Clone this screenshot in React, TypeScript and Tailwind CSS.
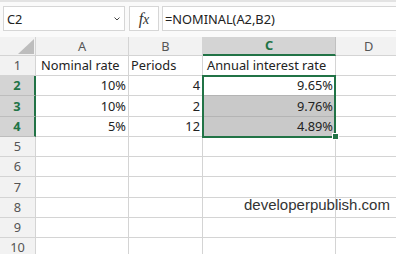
import React from "react";

const rowHeights = ["h-[20px]", "h-[20px]", "h-[21px]", "h-[20px]", "h-[20px]", "h-[20px]", "h-[21px]", "h-[20px]", "h-[20px]", "h-[20px]"];

type Cell = { text?: string; align?: "l" | "r"; pl?: string; fill?: boolean; darkLine?: boolean };

const data: Cell[][] = [
  [{ text: "Nominal rate", pl: "pl-[5px]" }, { text: "Periods", pl: "pl-[2px]" }, { text: "Annual interest rate", pl: "pl-[4px]" }, {}],
  [{ text: "10%", align: "r" }, { text: "4", align: "r" }, { text: "9.65%", align: "r", darkLine: true }, {}],
  [{ text: "10%", align: "r" }, { text: "2", align: "r" }, { text: "9.76%", align: "r", fill: true, darkLine: true }, {}],
  [{ text: "5%", align: "r" }, { text: "12", align: "r" }, { text: "4.89%", align: "r", fill: true }, {}],
];

export default function App() {
  return (
    <div className="relative w-[396px] h-[254px] overflow-hidden bg-[#fafafa] font-['Noto_Sans',sans-serif] text-[12.8px] text-[#222]">
      {/* top band */}
      <div className="h-[2px] bg-[#e3e3e3]" />
      {/* formula bar */}
      <div className="flex h-[35px] pt-[4px]">
        <div className="ml-[3px] flex h-[25px] w-[122px] items-center justify-between border border-[#d6d6d6] bg-white pl-[3px] pr-[4px]">
          <span className="leading-[17px] pt-[1px]">C2</span>
          <svg width="6" height="4" viewBox="0 0 6 4" className="mt-[1px]">
            <path d="M0.5 0.5 L3 3 L5.5 0.5" fill="none" stroke="#444" strokeWidth="1" />
          </svg>
        </div>
        <div className="ml-[4px] flex h-[25px] w-[30px] items-center justify-center border border-[#d6d6d6] bg-white">
          <span className="font-['Liberation_Serif',serif] italic text-[16px] leading-[17px] text-[#333]">
            f<span className="text-[14px]">x</span>
          </span>
        </div>
        <div className="ml-[3px] mr-[-4px] flex h-[25px] flex-1 items-center border border-[#d6d6d6] bg-white pl-[2px]">
          <span className="leading-[17px] pt-[2px]">=NOMINAL(A2,B2)</span>
        </div>
      </div>
      {/* sheet grid */}
      <div className="grid grid-cols-[36px_93px_74px_133px_1fr]">
        {/* header row */}
        <div className="relative h-[19px] border-r border-b border-[#d4d4d4] bg-[#f2f2f2]">
          <svg width="16" height="15" viewBox="0 0 16 15" className="absolute left-[18px] top-[2px]">
            <polygon points="16,0 16,15 0,15" fill="#bdbdbd" />
          </svg>
        </div>
        <div className="flex h-[19px] items-center justify-center border-r border-b border-[#d4d4d4] bg-[#f2f2f2] leading-[17px] text-[#555]">A</div>
        <div className="flex h-[19px] items-center justify-center border-r border-b border-[#d4d4d4] bg-[#f2f2f2] leading-[17px] text-[#555]">B</div>
        <div className="flex h-[19px] items-center justify-center border-r border-b-2 border-r-[#c0c0c0] border-b-[#217346] bg-[#d4d4d4] leading-[17px] font-bold text-[#217346]">C</div>
        <div className="flex h-[19px] items-center justify-start border-b border-[#d4d4d4] bg-[#f2f2f2] pl-[28px] leading-[17px] text-[#555]">D</div>
        {rowHeights.map((h, i) => {
          const sel = i >= 1 && i <= 3;
          const row = data[i] || [{}, {}, {}, {}];
          return (
            <React.Fragment key={i}>
              <div
                className={
                  sel
                    ? `${h} flex items-end justify-center pb-[1px] border-b border-r-2 border-b-[#bdbdbd] border-r-[#217346] bg-[#d4d4d4] leading-[17px] font-bold text-[#217346]`
                    : `${h} flex items-end justify-center pb-[1px] border-b border-r border-[#d4d4d4] bg-[#f2f2f2] leading-[17px] text-[#555]`
                }
              >
                {i + 1}
              </div>
              {row.map((c, j) => (
                <div
                  key={j}
                  className={[
                    h,
                    "flex items-end pb-[1px] whitespace-nowrap leading-[17px] border-b",
                    j < 3 ? "border-r" : "",
                    c.darkLine ? "border-b-[#b4b4b4]" : "border-b-[#d4d4d4]",
                    "border-r-[#d4d4d4]",
                    c.fill ? "bg-[#c9c9c9]" : "bg-white",
                    c.align === "r" ? "justify-end pr-[2px]" : "justify-start",
                    c.pl || "",
                  ].join(" ")}
                >
                  {c.text}
                </div>
              ))}
            </React.Fragment>
          );
        })}
      </div>
      {/* selection outline */}
      <div className="absolute left-[202px] top-[75px] h-[63px] w-[134px] border-2 border-[#217346]" />
      <div className="absolute left-[333px] top-[134px] h-[5px] w-[5px] bg-[#217346] outline outline-1 outline-white" />
      {/* watermark */}
      <div className="absolute left-[244px] top-[196px] font-['Liberation_Sans',sans-serif] text-[15px] leading-[17px] text-[#333]">
        developerpublish.com
      </div>
    </div>
  );
}
